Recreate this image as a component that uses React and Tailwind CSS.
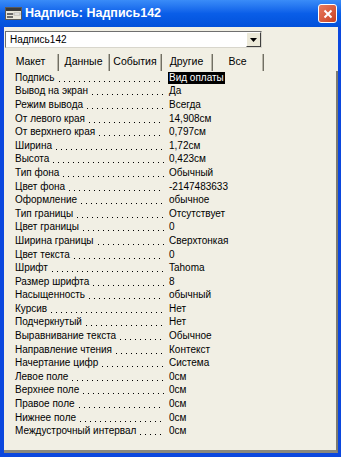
import React from "react"

const rows = [
  ["Подпись", "Вид оплаты"],
  ["Вывод на экран", "Да"],
  ["Режим вывода", "Всегда"],
  ["От левого края", "14,908см"],
  ["От верхнего края", "0,797см"],
  ["Ширина", "1,72см"],
  ["Высота", "0,423см"],
  ["Тип фона", "Обычный"],
  ["Цвет фона", "-2147483633"],
  ["Оформление", "обычное"],
  ["Тип границы", "Отсутствует"],
  ["Цвет границы", "0"],
  ["Ширина границы", "Сверхтонкая"],
  ["Цвет текста", "0"],
  ["Шрифт", "Tahoma"],
  ["Размер шрифта", "8"],
  ["Насыщенность", "обычный"],
  ["Курсив", "Нет"],
  ["Подчеркнутый", "Нет"],
  ["Выравнивание текста", "Обычное"],
  ["Направление чтения", "Контекст"],
  ["Начертание цифр", "Система"],
  ["Левое поле", "0см"],
  ["Верхнее поле", "0см"],
  ["Правое поле", "0см"],
  ["Нижнее поле", "0см"],
  ["Междустрочный интервал", "0см"],
]

const tabs = [
  { name: "Макет", w: "w-[53px]" },
  { name: "Данные", w: "w-[49px]" },
  { name: "События", w: "w-[50px]" },
  { name: "Другие", w: "w-[49px]" },
  { name: "Все", w: "w-[49px]" },
]

function TitleIcon() {
  return (
    <svg width="17" height="13" viewBox="0 0 17 13">
      <rect x="0.5" y="0.5" width="16" height="12" fill="#e8e6dc" stroke="#5a5a5a" />
      <rect x="1" y="1" width="15" height="3" fill="#3a3a3a" />
      <rect x="2" y="6" width="6" height="2" fill="#6a6a6a" />
      <rect x="9" y="6" width="6" height="2" fill="#ffffff" stroke="#7a7a7a" strokeWidth="0.5" />
      <rect x="2" y="9" width="6" height="2" fill="#6a6a6a" />
    </svg>
  )
}

export default function App() {
  return (
    <div className="w-[341px] h-[457px] flex flex-col bg-[#0b47de] font-['Liberation_Sans',Arial,sans-serif] overflow-hidden">
      {/* Title bar */}
      <div className="h-[27px] flex items-center pl-[5px] pr-[4px] bg-gradient-to-b from-[#3a8cf8] via-[#0a5ee8] to-[#0250da]">
        <TitleIcon />
        <span className="ml-[3px] text-white font-bold text-[12.5px] leading-none">Надпись: Надпись142</span>
        <div className="ml-auto w-[19px] h-[19px] rounded-[3px] border border-white bg-gradient-to-br from-[#e97b5f] to-[#c8401f] flex items-center justify-center">
          <svg width="10" height="10" viewBox="0 0 10 10">
            <path d="M1.5 1.5 L8.5 8.5 M8.5 1.5 L1.5 8.5" stroke="white" strokeWidth="2" />
          </svg>
        </div>
      </div>

      {/* Client area */}
      <div className="flex-1 ml-[4px] mr-[3px] mb-[4px] bg-[#f1efe4] flex flex-col">
        {/* Combo */}
        <div className="mt-[4px] ml-[1px] w-[257px] h-[17px] flex bg-white border border-t-[#6f6f6f] border-l-[#6f6f6f] border-b-[#d8d6cc] border-r-[#d8d6cc]">
          <span className="flex-1 pl-[4px] text-[10px] leading-[15px] text-black">Надпись142</span>
          <div className="w-[15px] h-[15px] bg-[#ece9d8] border border-t-white border-l-white border-b-[#404040] border-r-[#404040] flex items-center justify-center">
            <svg width="7" height="4" viewBox="0 0 7 4">
              <path d="M0 0 H7 L3.5 4 Z" fill="black" />
            </svg>
          </div>
        </div>

        {/* Tabs */}
        <div className="mt-[5px] h-[18px] flex items-end">
          {tabs.map((t) => (
            <React.Fragment key={t.name}>
              <div className={`${t.w} h-[18px] flex items-center justify-center text-[10.5px] text-black`}>{t.name}</div>
              <div className="w-[2px] h-[17px] border-l border-l-[#b8b5a8] border-r border-r-[#716f64]" />
            </React.Fragment>
          ))}
        </div>

        {/* Property list */}
        <div className="flex-1 flex flex-col border-r-2 border-r-[#7d7b70] border-b-[3px] border-b-[#8a887c]">
          <div className="flex flex-col">
            {rows.map(([label, value], i) => (
              <div key={label} className="h-[13.6px] flex items-center text-[10px] leading-none text-black">
                <div className="w-[164px] h-full flex items-center pl-[11px] pr-[4px] whitespace-nowrap">
                  <span>{label}</span>
                  <span className="flex-1 h-[1px] mt-[7px] ml-[4px] bg-[linear-gradient(to_right,#000_1px,transparent_1px)] bg-[length:5px_1px] bg-repeat-x" />
                </div>
                {i === 0 ? (
                  <span className="bg-black text-white px-[1px] leading-[12px]">{value}</span>
                ) : (
                  <span className="pl-[1px]">{value}</span>
                )}
              </div>
            ))}
          </div>
        </div>
      </div>
    </div>
  )
}
